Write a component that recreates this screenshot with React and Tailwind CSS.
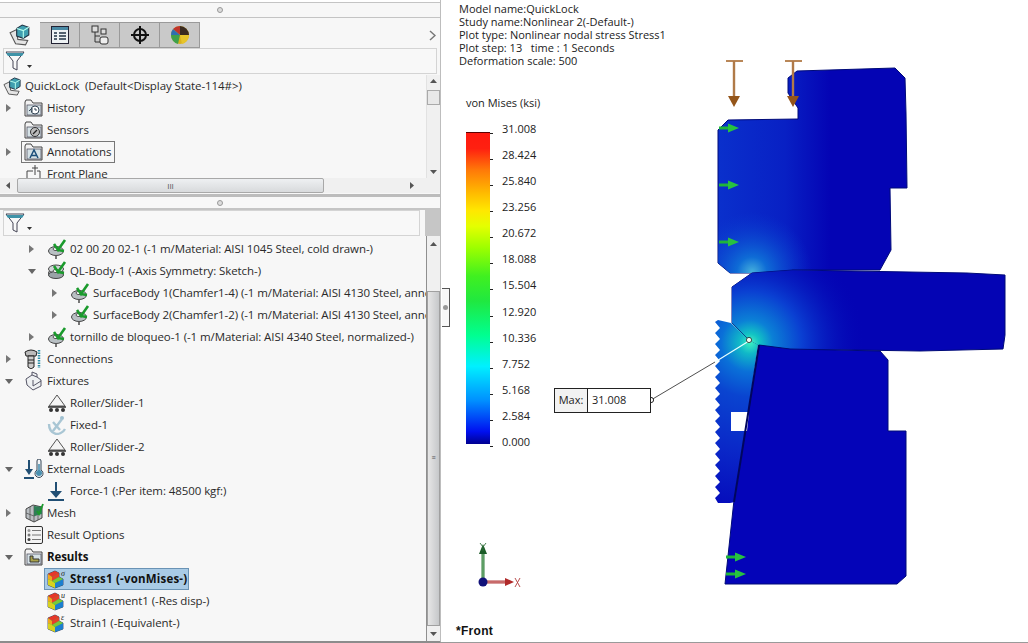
import React from "react";

const Part = ({ s = 20 }) => (
  <svg width={s} height={s} viewBox="0 0 20 20">
    <path d="M1 8 L7 5 L8 14 L17 15 L15 19 L6 18 Z" fill="#e4e4e4" stroke="#555" />
    <path d="M7 4 L12 1 L18 3 L18 10 L13 13 L7 11 Z" fill="#3f9fb0" stroke="#234" />
    <path d="M7 4 L13 6 L18 3 M13 6 L13 13" fill="none" stroke="#bfe" />
  </svg>
);
const Folder = ({ children }) => (
  <svg width="20" height="20" viewBox="0 0 20 20">
    <path d="M1 4 L1 18 L18 18 L18 5 L9 5 L7 2 L2 2 Z" fill="#f2f2f2" stroke="#444" />
    <rect x="3" y="7" width="14" height="10" fill="#d6e2e6" stroke="#445" strokeWidth="0.7" />
    {children}
  </svg>
);
const HistoryIcon = () => (
  <Folder>
    <circle cx="11" cy="12" r="4" fill="#fff" stroke="#345" />
    <path d="M11 10 V12 H13 M5 13 L8 10 L8 14" fill="none" stroke="#345" />
  </Folder>
);
const SensorIcon = () => (
  <Folder>
    <circle cx="11" cy="12" r="4.5" fill="#bbb" stroke="#333" />
    <path d="M9 14 L13 10" stroke="#222" strokeWidth="1.2" />
  </Folder>
);
const AnnotationIcon = () => (
  <Folder>
    <path d="M6 16 L10 8 L14 16 M7.5 13.5 H12.5" fill="none" stroke="#1c4f7a" strokeWidth="1.5" />
  </Folder>
);
const ResultsFolder = () => (
  <Folder>
    <path d="M6 9 V15 H15 V12 H9 V9 Z" fill="#a8a24a" stroke="#333" />
  </Folder>
);
const PlaneIcon = () => (
  <svg width="20" height="20" viewBox="0 0 20 20">
    <path d="M3 18 V7 H9 M13 7 H16 V18" fill="none" stroke="#444" />
    <path d="M11 1 V11 M8 4 H14" fill="none" stroke="#444" />
  </svg>
);
const Body = ({ stacked }) => (
  <svg width="22" height="20" viewBox="0 0 22 20">
    <ellipse cx="9" cy="12" rx="7.5" ry="4.5" fill="#b9c0c4" stroke="#444" />
    {stacked ? (
      <ellipse cx="9" cy="8" rx="7.5" ry="4" fill="#cfd4d6" stroke="#444" />
    ) : (
      <path d="M9 16 V20" stroke="#555" strokeWidth="1.6" />
    )}
    {stacked && <ellipse cx="9" cy="14" rx="7.5" ry="3.5" fill="#9aa3a7" stroke="#444" />}
    <ellipse cx="9" cy="10" rx="3" ry="1.6" fill="#fff" stroke="#555" />
    <path d="M7 5 L11 11 L18 1 M11 11 L17 12" fill="none" stroke="#1a9a2c" strokeWidth="2.6" />
  </svg>
);
const BoltIcon = () => (
  <svg width="20" height="20" viewBox="0 0 20 20">
    <path d="M1 3 Q7 -1 13 3 L12 7 L2 7 Z" fill="#bbb" stroke="#222" />
    <path d="M4 7 H10 V18 L7 20 L4 18 Z" fill="#ccc" stroke="#222" />
    <path d="M4 11 H10 M4 14 H10" stroke="#222" />
    <path d="M15 1 V19" stroke="#2f8fa8" strokeWidth="2.5" strokeDasharray="1.5 1" />
  </svg>
);
const FixtureIcon = () => (
  <svg width="20" height="20" viewBox="0 0 20 20">
    <path d="M2 8 L8 4 L8 1 L13 3 L13 6 L17 9 L17 15 L9 19 L3 14 Z" fill="#eef0f2" stroke="#556" />
    <path d="M8 4 L13 6 M9 9 V15 L17 10" fill="none" stroke="#556" />
  </svg>
);
const RollerIcon = () => (
  <svg width="20" height="20" viewBox="0 0 20 20">
    <path d="M10 2 L2 13 H18 Z" fill="#f5f5f5" stroke="#555" />
    <path d="M1 14 H19" stroke="#222" strokeWidth="1.4" />
    <circle cx="4" cy="17" r="2" fill="#333" />
    <circle cx="10" cy="17" r="2" fill="#333" />
    <circle cx="16" cy="17" r="2" fill="#333" />
  </svg>
);
const AnchorIcon = () => (
  <svg width="20" height="20" viewBox="0 0 20 20">
    <circle cx="15" cy="3" r="2" fill="#9fc0d0" />
    <path d="M15 4 L6 16 M6 7 L13 15 M2 9 Q2 17 9 19 Q15 19 18 14" fill="none" stroke="#a9c6d4" strokeWidth="2.4" />
  </svg>
);
const LoadsIcon = () => (
  <svg width="20" height="20" viewBox="0 0 20 20">
    <path d="M5 1 V12 M0 19 H10" stroke="#214f74" strokeWidth="2" fill="none" />
    <path d="M1 10 H9 L5 16 Z" fill="#214f74" />
    <path d="M13 2 A2 2 0 0 1 17 2 V11 A4 4 0 1 1 13 11 Z" fill="#f4f6f8" stroke="#345" />
    <circle cx="15" cy="14" r="3" fill="#4a90b0" />
    <path d="M15 14 V5" stroke="#4a90b0" strokeWidth="1.6" />
  </svg>
);
const ForceIcon = () => (
  <svg width="20" height="20" viewBox="0 0 20 20">
    <path d="M9 1 V13 M1 19 H17" stroke="#214f74" strokeWidth="2" fill="none" />
    <path d="M3 10 H15 L9 17 Z" fill="#214f74" />
  </svg>
);
const MeshIcon = () => (
  <svg width="20" height="20" viewBox="0 0 20 20">
    <path d="M2 6 L9 2 L18 4 L18 15 L10 19 L2 15 Z" fill="#b9bec2" stroke="#444" />
    <path d="M6 4 V17 M10 3 V19 M14 3 V17 M2 10 L10 13 L18 9" stroke="#555" fill="none" strokeWidth="0.8" />
    <path d="M10 3 L18 4 L18 11 L10 13 Z" fill="#2f7d56" />
    <path d="M13 8 L15 11 L19 1" stroke="#1a9a2c" strokeWidth="1.8" fill="none" />
  </svg>
);
const OptionsIcon = () => (
  <svg width="20" height="20" viewBox="0 0 20 20">
    <rect x="1.5" y="1.5" width="17" height="17" rx="1.5" fill="#f3f3f3" stroke="#333" />
    <circle cx="5" cy="5.5" r="1.5" fill="#999" />
    <circle cx="5" cy="10" r="1.5" fill="#777" />
    <circle cx="5" cy="14.5" r="1.5" fill="#444" />
    <path d="M8 5.5 H17 M8 10 H17 M8 14.5 H17" stroke="#777" />
  </svg>
);
const PlotIcon = ({ sym }) => (
  <svg width="22" height="20" viewBox="0 0 22 20">
    <path d="M1 5 L8 2 L12 4 L12 8 L16 10 L16 16 L8 19 L1 16 Z" fill="#2fb84a" stroke="#225" strokeWidth="0.7" />
    <path d="M1 5 L8 2 L12 4 L5 8 Z" fill="#e8362a" />
    <path d="M1 5 L5 8 L5 12 L1 10 Z" fill="#f2a51e" />
    <path d="M5 8 L12 4 L12 8 L5 12 Z" fill="#e6402a" />
    <path d="M1 10 L5 12 L8 14 L8 19 L1 16 Z" fill="#d8d21e" />
    <path d="M8 14 L16 10 L16 16 L8 19 Z" fill="#1c7fd0" />
    <path d="M5 12 L12 8 L16 10 L8 14 Z" fill="#7ac83a" />
    <text x="14" y="6.5" fontSize="8" fontStyle="italic" fill="#222" fontFamily="Liberation Serif, serif">{sym}</text>
  </svg>
);

const Arrow = ({ type }) => {
  if (type === "closed")
    return (
      <svg width="5" height="8" viewBox="0 0 5 8"><path d="M0 0 L5 4 L0 8 Z" fill="#777" /></svg>
    );
  if (type === "open")
    return (
      <svg width="8" height="5" viewBox="0 0 8 5"><path d="M0 0 H8 L4 5 Z" fill="#666" /></svg>
    );
  return null;
};

const rowIndent = ["pl-0", "pl-[23px]", "pl-[46px]"];

function Row({ level = 0, arrow, icon, children, bold, boxed, selected }) {
  return (
    <div className={`h-[22px] flex items-center whitespace-nowrap ${rowIndent[level]}`}>
      <span className="w-[17px] shrink-0 flex justify-center">
        <Arrow type={arrow} />
      </span>
      <span className="relative z-10 w-[30px] shrink-0 flex justify-start pl-[7px]">{icon}</span>
      <span
        className={
          selected
            ? "-ml-[26px] pl-[25px] pr-[1px] h-[22px] flex items-center border border-[#6a93b5] bg-[#a9cbe6] font-bold text-[#111] tracking-[0.2px]"
            : boxed
              ? "-ml-[26px] pl-[25px] pr-[3px] h-[22px] flex items-center border border-[#777]"
              : bold
                ? "font-bold text-[#111]"
                : ""
        }
      >
        {children}
      </span>
    </div>
  );
}

const FilterIcon = () => (
  <div className="flex items-end gap-[2px] pl-[1px]">
    <svg width="20" height="20" viewBox="0 0 20 20">
      <path d="M1 1 H19 L12 10 V19 L8 17 V10 Z" fill="#f8f8f8" stroke="#445" />
      <path d="M1 2 H19 L17 5 H3 Z" fill="#3f93a8" />
    </svg>
    <svg className="mb-[3px]" width="5" height="3" viewBox="0 0 5 3"><path d="M0 0 H5 L2.5 3 Z" fill="#333" /></svg>
  </div>
);

const Splitter = () => (
  <div className="flex items-center justify-center">
    <span className="w-[6px] h-[6px] rounded-full border border-[#999] bg-[#ddd]" />
  </div>
);

const tabIcons = [
  <Part s={22} key="a" />,
  <svg key="b" width="20" height="20" viewBox="0 0 20 20"><rect x="1.5" y="1.5" width="17" height="17" fill="#eef2f4" stroke="#223" /><rect x="2" y="2" width="16" height="3" fill="#4a8aa5" /><path d="M4 8 H7 M9 8 H16 M4 11 H7 M9 11 H16 M4 14 H7 M9 14 H16" stroke="#234" strokeWidth="1.4" /></svg>,
  <svg key="c" width="20" height="20" viewBox="0 0 20 20"><path d="M5 6 V17 H10 M5 11 H10" fill="none" stroke="#333" /><rect x="2" y="1" width="6" height="6" fill="#ddd" stroke="#333" /><rect x="11" y="4" width="5" height="5" fill="#ddd" stroke="#333" /><rect x="10" y="12" width="8" height="7" rx="2" fill="#eee" stroke="#333" /></svg>,
  <svg key="d" width="20" height="20" viewBox="0 0 20 20"><circle cx="10" cy="10" r="6" fill="none" stroke="#111" strokeWidth="2" /><path d="M10 1 V19 M1 10 H19" stroke="#111" strokeWidth="2" /></svg>,
  <svg key="e" width="20" height="20" viewBox="0 0 20 20"><circle cx="10" cy="10" r="9" fill="#d9b11e" /><path d="M10 10 L10 1 A9 9 0 0 1 19 10 Z" fill="#3a2a20" /><path d="M10 10 L19 10 A9 9 0 0 1 12 19 Z" fill="#e7c42a" /><path d="M10 10 L3 4 A9 9 0 0 1 10 1 Z" fill="#c0342a" /><path d="M10 10 L3 4 A9 9 0 0 0 1 10 Z" fill="#2f6fb0" /><path d="M10 10 L1 10 A9 9 0 0 0 8 19 Z" fill="#3fa04a" /></svg>,
];

const treeTop = [
  { arrow: "closed", icon: <HistoryIcon />, t: "History" },
  { icon: <SensorIcon />, t: "Sensors" },
  { arrow: "closed", icon: <AnnotationIcon />, t: "Annotations", boxed: true },
  { icon: <PlaneIcon />, t: "Front Plane" },
];

const treeMain = [
  { level: 1, arrow: "closed", icon: <Body />, t: "02 00 20 02-1 (-1 m/Material: AISI 1045 Steel, cold drawn-)" },
  { level: 1, arrow: "open", icon: <Body stacked />, t: "QL-Body-1 (-Axis Symmetry: Sketch-)" },
  { level: 2, arrow: "closed", icon: <Body />, t: "SurfaceBody 1(Chamfer1-4) (-1 m/Material: AISI 4130 Steel, annealed-)" },
  { level: 2, arrow: "closed", icon: <Body />, t: "SurfaceBody 2(Chamfer1-2) (-1 m/Material: AISI 4130 Steel, annealed-)" },
  { level: 1, arrow: "closed", icon: <Body />, t: "tornillo de bloqueo-1 (-1 m/Material: AISI 4340 Steel, normalized-)" },
  { level: 0, arrow: "closed", icon: <BoltIcon />, t: "Connections" },
  { level: 0, arrow: "open", icon: <FixtureIcon />, t: "Fixtures" },
  { level: 1, icon: <RollerIcon />, t: "Roller/Slider-1" },
  { level: 1, icon: <AnchorIcon />, t: "Fixed-1" },
  { level: 1, icon: <RollerIcon />, t: "Roller/Slider-2" },
  { level: 0, arrow: "open", icon: <LoadsIcon />, t: "External Loads" },
  { level: 1, icon: <ForceIcon />, t: "Force-1 (:Per item: 48500 kgf:)" },
  { level: 0, arrow: "closed", icon: <MeshIcon />, t: "Mesh" },
  { level: 0, icon: <OptionsIcon />, t: "Result Options" },
  { level: 0, arrow: "open", icon: <ResultsFolder />, t: "Results", bold: true },
  { level: 1, icon: <PlotIcon sym="σ" />, t: "Stress1 (-vonMises-)", selected: true },
  { level: 1, icon: <PlotIcon sym="u" />, t: "Displacement1 (-Res disp-)" },
  { level: 1, icon: <PlotIcon sym="ε" />, t: "Strain1 (-Equivalent-)" },
];

const legendValues = ["31.008", "28.424", "25.840", "23.256", "20.672", "18.088", "15.504", "12.920", "10.336", "7.752", "5.168", "2.584", "0.000"];

/* FEA plot geometry, in page coordinates */
const upper = "M718 130 L728 120 L798 119 L798 108 L788 93 L788 78 L797 71 L895 68 L905 78 L906 113 L907 188 L890 188 L891 250 L880 270 L792 270 L792 273 L730 273 L718 263 Z";
const middle = "M752 273 L793 270 L967 273 L1005 275 L1005 335 L1003 349 L920 351 L790 349 L758 345 L749 340 L732 323 L732 287 Z";
const lower = "M759 345 L790 349 L880 351 L888 360 L888 431 L906 431 L906 576 L897 584 L725 584 L734 500 Z";
let teeth = "M718 320 L731 323 L749 340 L758 345 L735 502 L730 503 L718 503 L715 498";
for (let i = 0; i < 16; i++) {
  const y = 498 - i * 11;
  teeth += ` L720 ${y - 5} L715 ${y - 11}`;
}
teeth += " Z";

const LoadArrow = ({ x }) => (
  <g>
    <path d={`M${x - 8} 61 H${x + 9}`} stroke="#a8692e" strokeWidth="1.6" />
    <path d={`M${x} 61 V97`} stroke="#b07a48" strokeWidth="2.4" />
    <path d={`M${x - 6} 96 H${x + 6} L${x} 107 Z`} fill="#94551a" />
  </g>
);
const GreenArrow = ({ x, y }) => (
  <g>
    <path d={`M${x} ${y} H${x + 12}`} stroke="#1fb53a" strokeWidth="3" />
    <path d={`M${x + 9} ${y - 4.5} L${x + 20} ${y} L${x + 9} ${y + 4.5} Z`} fill="#27c241" />
  </g>
);

function Plot() {
  return (
    <svg className="absolute left-[2px] top-0" width="585" height="643" viewBox="443 0 585 643">
      <defs>
        <radialGradient id="hot" gradientUnits="userSpaceOnUse" cx="750" cy="343" r="115">
          <stop offset="0" stopColor="#4ff0c0" />
          <stop offset="0.08" stopColor="#12c4c4" />
          <stop offset="0.2" stopColor="#0b80d6" />
          <stop offset="0.45" stopColor="#0a40d2" />
          <stop offset="1" stopColor="#0404b4" stopOpacity="0" />
        </radialGradient>
        <radialGradient id="toothHot" gradientUnits="userSpaceOnUse" cx="750" cy="343" r="180">
          <stop offset="0" stopColor="#3cf0c0" />
          <stop offset="0.06" stopColor="#10b8c8" />
          <stop offset="0.16" stopColor="#0a70d8" />
          <stop offset="0.3" stopColor="#0a44d0" />
          <stop offset="0.6" stopColor="#0a28c8" />
          <stop offset="1" stopColor="#0404b8" />
        </radialGradient>
        <radialGradient id="seat" gradientUnits="userSpaceOnUse" cx="752" cy="272" r="60">
          <stop offset="0" stopColor="#45b0dc" />
          <stop offset="0.25" stopColor="#0e6cd6" />
          <stop offset="1" stopColor="#0a3ad0" stopOpacity="0" />
        </radialGradient>
        <linearGradient id="leftGlow" gradientUnits="userSpaceOnUse" x1="718" y1="0" x2="830" y2="0">
          <stop offset="0" stopColor="#0a30cc" />
          <stop offset="0.6" stopColor="#0820c4" />
          <stop offset="1" stopColor="#0404b4" />
        </linearGradient>
      </defs>

      <path d={upper} fill="url(#leftGlow)" stroke="#000a78" strokeWidth="1" />
      <path d={upper} fill="url(#seat)" />
      <path d={middle} fill="#0404b4" stroke="#000a78" strokeWidth="1" />
      <path d={middle} fill="url(#hot)" />
      <path d={lower} fill="#0404b8" stroke="#000a78" strokeWidth="1" />
      <path d={teeth} fill="url(#toothHot)" />
      <path d="M731 412 H749 L747 431 H731 Z" fill="#fff" />
      <path d="M759 345 L734 502" stroke="#00065e" strokeWidth="2" />
      <path d="M732 323 L749 340" stroke="#0a3f8a" strokeWidth="0.8" />

      <LoadArrow x={734} />
      <LoadArrow x={793} />
      <GreenArrow x={719} y={128} />
      <GreenArrow x={719} y={185} />
      <GreenArrow x={719} y={242} />
      <GreenArrow x={726} y={557} />
      <GreenArrow x={726} y={574} />

      <path d="M651 400 L715 362" stroke="#222" strokeWidth="0.8" />
      <path d="M715 362 L749 341" stroke="#e8ffff" strokeWidth="1.2" />
      <circle cx="749" cy="340" r="2.6" fill="#eefdf4" stroke="#222" strokeWidth="0.8" />
      <circle cx="651" cy="400" r="2.6" fill="#fff" stroke="#111" strokeWidth="0.9" />

      <g>
        <path d="M483 582 V553" stroke="#2e7d3a" strokeWidth="3" />
        <path d="M483 582 V553" stroke="#8cc08f" strokeWidth="1" />
        <path d="M479 554 L483 544 L487 554 Z" fill="#1c5c28" />
        <path d="M483 582 H508" stroke="#b03a3a" strokeWidth="3" />
        <path d="M483 582 H508" stroke="#e09a9a" strokeWidth="1" />
        <path d="M505 578 L514 582 L505 586 Z" fill="#b02a2a" />
        <circle cx="483" cy="582" r="4.5" fill="#12127a" />
        <path d="M480 543 L483 547 L486 543 M483 547 V551" stroke="#2f6f3a" fill="none" strokeWidth="0.9" />
        <path d="M515 578 L520 587 M520 578 L515 587" stroke="#b03a3a" fill="none" strokeWidth="0.9" />
      </g>
    </svg>
  );
}

export default function App() {
  return (
    <div className="w-[1028px] h-[643px] flex bg-white overflow-hidden font-['Open_Sans',sans-serif] text-[11.5px] tracking-[-0.08px] text-[#2a2a2a]">
      {/* Left manager pane */}
      <aside className="relative w-[441px] h-full shrink-0 flex flex-col bg-[#f7f7f7] border-r border-[#bdbdbd] border-b-2 border-b-[#8c8c8c]">
        <div className="h-[3px] bg-white border-b border-[#c4c4c4]" />
        <div className="h-[15px] border-b border-[#c4c4c4] flex justify-center"><Splitter /></div>

        <div className="h-[26px] mt-[4px] flex items-stretch">
          {tabIcons.map((icon, i) => (
            <div
              key={i}
              className={
                i === 0
                  ? "w-[40px] flex items-center justify-center"
                  : "w-[40px] flex items-center justify-center bg-[#c9c9c9] border border-[#9a9a9a] border-l-0"
              }
            >
              {icon}
            </div>
          ))}
          <div className="flex-1 flex items-center justify-end pr-[4px]">
            <svg width="7" height="11" viewBox="0 0 7 11"><path d="M1 1 L6 5.5 L1 10" fill="none" stroke="#777" strokeWidth="1.5" /></svg>
          </div>
        </div>
        <div className="mx-[3px] h-[26px] border border-[#d4d4d4] bg-[#f8f8f8] flex items-center"><FilterIcon /></div>

        {/* Top tree */}
        <div className="h-[103px] flex mt-[1px]">
          <div className="flex-1 min-w-0 overflow-hidden">
            <div className="h-[22px] flex items-center gap-[3px] pl-[3px] whitespace-nowrap">
              <Part s={19} />
              <span>QuickLock&nbsp; (Default&lt;Display State-114#&gt;)</span>
            </div>
            {treeTop.map((r) => (
              <Row key={r.t} arrow={r.arrow} icon={r.icon} boxed={r.boxed}>{r.t}</Row>
            ))}
          </div>
          <div className="w-[14px] shrink-0 bg-[#f0f0f0] border-l border-[#e2e2e2] flex flex-col items-center justify-between py-[4px]">
            <div className="flex flex-col items-center gap-[7px]">
              <svg width="7" height="4" viewBox="0 0 7 4"><path d="M0 4 L3.5 0 L7 4 Z" fill="#555" /></svg>
              <div className="w-[13px] h-[15px] bg-[#e8e8e8] border border-[#aaa]" />
            </div>
            <svg width="7" height="4" viewBox="0 0 7 4"><path d="M0 0 H7 L3.5 4 Z" fill="#555" /></svg>
          </div>
        </div>
        <div className="h-[15px] bg-[#f0f0f0] flex items-center px-[6px] gap-[7px] shrink-0">
          <svg width="4" height="7" viewBox="0 0 4 7"><path d="M4 0 V7 L0 3.5 Z" fill="#555" /></svg>
          <div className="w-[307px] h-[15px] rounded-[2px] border border-[#a8a8a8] bg-[linear-gradient(#eef0f2,#d8dadc)] flex items-center justify-center text-[8px] leading-none text-[#555]">III</div>
          <div className="flex-1" />
          <svg className="mr-[20px]" width="4" height="7" viewBox="0 0 4 7"><path d="M0 0 V7 L4 3.5 Z" fill="#555" /></svg>
        </div>

        <div className="h-[3px] mt-[1px] bg-[#bcbcbc]" />
        <div className="h-[13px] border-b-2 border-[#c4c4c4] flex justify-center shrink-0"><Splitter /></div>

        <div className="flex h-[26px] shrink-0 pl-[3px]">
          <div className="flex-1 border border-[#d4d4d4] bg-[#f8f8f8] flex items-center"><FilterIcon /></div>
          <div className="w-[15px] ml-[5px] bg-[#c6c6c6]" />
        </div>

        {/* Main tree */}
        <div className="flex-1 min-h-0 flex">
          <div className="flex-1 min-w-0 overflow-hidden pt-[2px]">
            {treeMain.map((r) => (
              <Row key={r.t} level={r.level} arrow={r.arrow} icon={r.icon} bold={r.bold} selected={r.selected}>{r.t}</Row>
            ))}
          </div>
          <div className="relative w-[14px] shrink-0 bg-[#f0f0f0] border-l border-[#8f8f8f]">
            <svg className="absolute top-[6px] left-[3px]" width="7" height="4" viewBox="0 0 7 4"><path d="M0 4 L3.5 0 L7 4 Z" fill="#555" /></svg>
            <div className="absolute top-[55px] bottom-[15px] inset-x-0 bg-[linear-gradient(90deg,#e6e6e6,#c6c8ca)] border border-[#a0a0a0] flex items-center justify-center text-[7px] text-[#555]">≡</div>
            <svg className="absolute bottom-[5px] left-[3px]" width="7" height="4" viewBox="0 0 7 4"><path d="M0 0 H7 L3.5 4 Z" fill="#555" /></svg>
          </div>
        </div>
      </aside>

      {/* Graphics area */}
      <main className="relative flex-1 h-full border-b border-[#9a9a9a]">
        <Plot />
        <div className="absolute left-[1px] top-[288px] w-[8px] h-[39px] bg-[#f8f8f8] border border-l-0 border-[#555] flex items-center justify-center">
          <span className="w-[5px] h-[5px] rounded-full bg-[#999]" />
        </div>

        <div className="relative pl-[18px] pt-[2px] text-[11px] leading-[13px] tracking-normal text-[#222]">
          <div>Model name:QuickLock</div>
          <div>Study name:Nonlinear 2(-Default-)</div>
          <div>Plot type: Nonlinear nodal stress Stress1</div>
          <div>Plot step: 13 &nbsp; time : 1 Seconds</div>
          <div>Deformation scale: 500</div>
        </div>

        {/* Legend */}
        <div className="relative ml-[25px] mt-[29px] text-[11px] tracking-normal text-[#222]">
          <div className="leading-[13px]">von Mises (ksi)</div>
          <div className="flex mt-[13px] h-[326px]">
            <div className="w-[24px] h-[312px] mt-[10px] border-t border-[#5c0000] bg-[linear-gradient(180deg,#ff1a10_0%,#ff2010_5%,#ff7a08_12%,#ffb800_19%,#ffe800_25%,#e4ff00_30%,#9cff00_37%,#40f020_46%,#20e840_54%,#00ff90_65%,#00f0ff_75%,#0090ff_86%,#0010f0_96%,#000090_100%)]" />
            <div className="ml-[12px] h-[326px] flex flex-col justify-between leading-[13px]">
              {legendValues.map((v) => (
                <div key={v} className="relative">
                  <span className="absolute -left-[12px] top-[11px] w-[3px] h-px bg-[#222]" />
                  {v}
                </div>
              ))}
            </div>
          </div>
        </div>

        {/* Max annotation */}
        <div className="absolute left-[113px] top-[388px] w-[97px] h-[25px] flex border border-[#222] bg-white text-[11px] tracking-normal text-[#222]">
          <div className="w-[33px] bg-[#f2f2f2] border-r border-[#222] flex items-center justify-center">Max:</div>
          <div className="flex-1 flex items-center pl-[4px]">31.008</div>
        </div>

        <div className="absolute left-[15px] top-[624px] text-[12px] leading-[14px] font-bold text-[#111] font-['Liberation_Sans',sans-serif] tracking-[0.3px]">*Front</div>
      </main>
    </div>
  );
}
